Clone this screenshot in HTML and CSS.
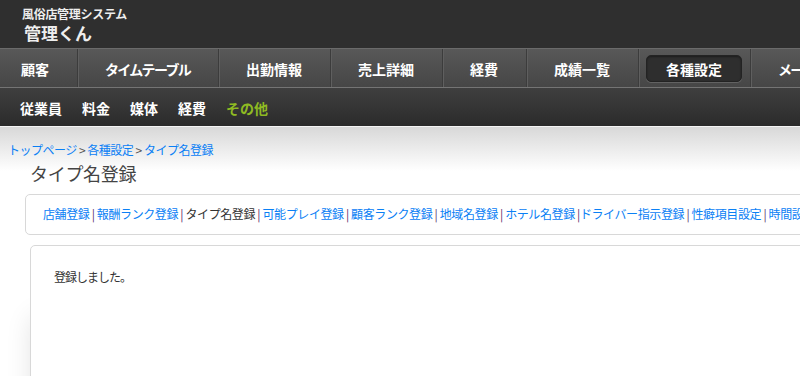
FILE: index.html
```html
<!DOCTYPE html>
<html lang="ja">

<head>
    <meta charset="UTF-8">
    <meta name="viewport" content="width=device-width, initial-scale=1.0">
    <title>管理くん</title>
    <link rel="stylesheet" href="styles.css">
</head>

<body>
    <div id="wrap">
        <div class="header">
            <p class="sub-title">風俗店管理システム</p>
            <h1 class="logo">管理くん</h1>
        </div>
        <ul class="nav">
            <li><a href="#">顧客</a></li>
            <li><a class="kana" href="#">タイムテーブル</a></li>
            <li><a href="#">出勤情報</a></li>
            <li><a href="#">売上詳細</a></li>
            <li><a href="#">経費</a></li>
            <li><a href="#">成績一覧</a></li>
            <li><a class="active" href="#">各種設定</a></li>
            <li><a class="kana" href="#">メール配信</a></li>
        </ul>
        <ul class="subnav">
            <li><a href="#">従業員</a></li>
            <li><a href="#">料金</a></li>
            <li><a href="#">媒体</a></li>
            <li><a href="#">経費</a></li>
            <li><a class="current" href="#">その他</a></li>
        </ul>
        <div class="page">
            <p class="crumb">
                <a href="#">トップページ</a> &gt; <a href="#">各種設定</a> &gt; <a href="#">タイプ名登録</a>
            </p>
            <h2 class="title">タイプ名登録</h2>
            <div class="box menu">
                <a href="#">店舗登録</a> | <a href="#">報酬ランク登録</a> | <span>タイプ名登録</span> | <a href="#">可能プレイ登録</a> | <a href="#">顧客ランク登録</a> | <a href="#">地域名登録</a> | <a href="#">ホテル名登録</a> |<a href="#">ドライバー指示登録</a> | <a href="#">性癖項目設定</a> | <a href="#">時間設定</a>
            </div>
            <div class="box result">
                <p>登録しました。</p>
            </div>
        </div>
    </div>
</body>

</html>
```

FILE: styles.css
```css
* {
    margin: 0;
    padding: 0;
}

html,
body {
    overflow: hidden;
    height: 100%;
}

body {
    font-family: "Noto Sans CJK JP", "Liberation Sans", sans-serif;
    background: #fff;
}

ul {
    list-style: none;
}

a {
    text-decoration: none;
}

#wrap {
    width: 1100px;
}

.header {
    height: 48px;
    background: #2f2f2f;
    padding: 6px 0 0 22px;
    box-sizing: border-box;
    color: #eee;
}

.sub-title {
    font-size: 12px;
    font-weight: bold;
    letter-spacing: -0.3px;
    line-height: 15px;
}

.logo {
    font-size: 17px;
    line-height: 24px;
    margin-left: 2px;
}

.nav {
    display: flex;
    height: 38px;
    border-top: 1px solid #6b6b6b;
    border-bottom: 1px solid #747474;
    background: linear-gradient(#585858, #464646);
}

.nav li+li {
    border-left: 1px solid #3c3c3c;
    box-shadow: inset 1px 0 0 #5f5f5f;
}

.nav a {
    display: block;
    margin: 6px 8px 5px 7px;
    padding: 0 19px;
    height: 27px;
    line-height: 26px;
    box-sizing: border-box;
    color: #fff;
    font-size: 14px;
    font-weight: bold;
    border-radius: 5px;
    border: 1px solid transparent;
}

.nav li:first-child a {
    margin-left: 0;
    padding-left: 20px;
}

.nav a.kana {
    letter-spacing: -1.7px;
}

.nav a.active {
    background: #2e2e2e;
    border-color: #232323;
    box-shadow: 0 1px 0 #626262, inset 0 1px 2px rgba(0, 0, 0, 0.4);
}

.subnav {
    display: flex;
    gap: 20px;
    height: 38px;
    padding-left: 20px;
    align-items: center;
    background: linear-gradient(#3f3f3f, #2b2b2b);
    border-bottom: 1px solid #f4f4f4;
}

.subnav a {
    color: #fff;
    font-size: 14px;
    font-weight: bold;
}

.subnav a.current {
    color: #8fbb22;
}

.page {
    background: linear-gradient(#d8d8d8, #f6f6f6 34px, #fff 44px);
    padding-top: 15px;
    height: 260px;
    font-size: 12px;
}

.crumb {
    padding-left: 8px;
    line-height: 16px;
    color: #555;
    letter-spacing: -0.5px;
}

.crumb a,
.menu a {
    color: #0a80f5;
}

.title {
    font-size: 18px;
    font-weight: normal;
    color: #444;
    margin: 2px 0 0 30px;
    line-height: 26px;
    letter-spacing: -0.3px;
}

.box {
    border: 1px solid #d8d8d8;
    border-radius: 5px;
    background: #fff;
}

.menu {
    margin: 8px 0 0 25px;
    height: 39px;
    line-height: 38px;
    padding-left: 17px;
    white-space: nowrap;
    color: #5b2e6b;
    letter-spacing: -0.4px;
}

.menu span {
    color: #333;
}

.result {
    margin: 10px 0 0 30px;
    height: 200px;
    padding: 19px 0 0 23px;
    box-shadow: -10px 60px 25px -12px rgba(0, 0, 0, 0.12);
}

.result p {
    color: #333;
    line-height: 24px;
    letter-spacing: -1px;
}
```
